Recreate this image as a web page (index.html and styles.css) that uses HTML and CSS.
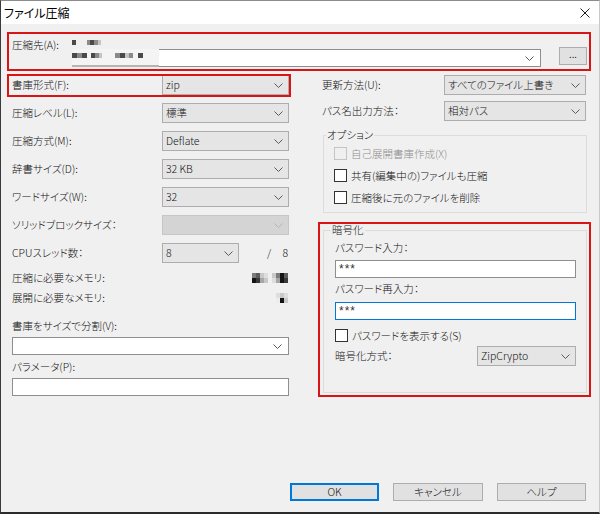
FILE: index.html
```html
<!DOCTYPE html>
<html lang="ja">
<head>
<meta charset="utf-8">
<title>ファイル圧縮</title>
<link rel="stylesheet" href="styles.css">
</head>
<body>
<div class="window">
  <div class="titlebar">
    <span class="title">ファイル圧縮</span>
    <svg class="close" width="10" height="10" viewBox="0 0 10 10"><path d="M0.5 0.5 L9.5 9.5 M9.5 0.5 L0.5 9.5" stroke="#1e1e1e" stroke-width="1" fill="none"/></svg>
  </div>
  <div class="content">
    <div class="dest">
      <span class="label dest-label">圧縮先(A):</span>
      <div class="dest-main">
        <div class="blur-line">
          <span class="px d w4"></span><span class="gap w11"></span><span class="px m w3"></span><span class="px d w4"></span><span class="px m w4"></span><span class="px l w3"></span>
        </div>
        <div class="dest-row">
          <div class="combo-edit dest-combo">
            <div class="mask">
              <span class="px d w5"></span><span class="px m w5"></span><span class="px d w5"></span><span class="gap w4"></span><span class="px d w4"></span><span class="px m w4"></span><span class="px l w3"></span><span class="gap w13"></span><span class="px m w5"></span><span class="px d w5"></span><span class="px l w4"></span><span class="px m w4"></span><span class="gap w5"></span><span class="px d w5"></span>
            </div>
            <div class="edit-field">
              <svg class="chev" width="9" height="5" viewBox="0 0 9 5"><path d="M0.5 0.5 L4.5 4.5 L8.5 0.5" stroke="#5a5a5a" fill="none"/></svg>
            </div>
          </div>
          <button class="btn browse">...</button>
        </div>
      </div>
    </div>

    <div class="columns">
      <div class="left">
        <div class="rows">
          <div class="row"><span class="label">書庫形式(F):</span><div class="combo wide"><span>zip</span><svg class="chev" width="9" height="5" viewBox="0 0 9 5"><path d="M0.5 0.5 L4.5 4.5 L8.5 0.5" stroke="#5a5a5a" fill="none"/></svg></div></div>
          <div class="row"><span class="label">圧縮レベル(L):</span><div class="combo wide"><span>標準</span><svg class="chev" width="9" height="5" viewBox="0 0 9 5"><path d="M0.5 0.5 L4.5 4.5 L8.5 0.5" stroke="#5a5a5a" fill="none"/></svg></div></div>
          <div class="row"><span class="label">圧縮方式(M):</span><div class="combo wide"><span>Deflate</span><svg class="chev" width="9" height="5" viewBox="0 0 9 5"><path d="M0.5 0.5 L4.5 4.5 L8.5 0.5" stroke="#5a5a5a" fill="none"/></svg></div></div>
          <div class="row"><span class="label">辞書サイズ(D):</span><div class="combo wide"><span>32 KB</span><svg class="chev" width="9" height="5" viewBox="0 0 9 5"><path d="M0.5 0.5 L4.5 4.5 L8.5 0.5" stroke="#5a5a5a" fill="none"/></svg></div></div>
          <div class="row"><span class="label">ワードサイズ(W):</span><div class="combo wide"><span>32</span><svg class="chev" width="9" height="5" viewBox="0 0 9 5"><path d="M0.5 0.5 L4.5 4.5 L8.5 0.5" stroke="#5a5a5a" fill="none"/></svg></div></div>
          <div class="row"><span class="label">ソリッドブロックサイズ：</span><div class="combo wide disabled"><span></span><svg class="chev" width="9" height="5" viewBox="0 0 9 5"><path d="M0.5 0.5 L4.5 4.5 L8.5 0.5" stroke="#b4b4b4" fill="none"/></svg></div></div>
          <div class="row"><span class="label">CPUスレッド数：</span>
            <div class="cpu">
              <div class="combo narrow"><span>8</span><svg class="chev" width="9" height="5" viewBox="0 0 9 5"><path d="M0.5 0.5 L4.5 4.5 L8.5 0.5" stroke="#5a5a5a" fill="none"/></svg></div>
              <span class="of"><span>/</span><span>8</span></span>
            </div>
          </div>
        </div>
        <div class="mem-row first"><span class="label">圧縮に必要なメモリ:</span>
          <span class="mem">
            <span class="pix"><i class="c4"></i><i class="c3"></i><i class="c6"></i><i class="c7"></i><i class="c1"></i><i class="c2"></i><i class="c5"></i><i class="c6"></i></span>
            <span class="pix"><i class="c6"></i><i class="c4"></i><i class="c1"></i><i class="c3"></i><i class="c7"></i><i class="c5"></i><i class="c1"></i><i class="c2"></i></span>
          </span>
        </div>
        <div class="mem-row"><span class="label">展開に必要なメモリ:</span>
          <span class="mem">
            <span class="pix three"><i class="c7"></i><i class="c6"></i><i class="c7"></i><i class="c8"></i><i class="c1"></i><i class="c6"></i></span>
          </span>
        </div>
        <div class="field-label">書庫をサイズで分割(V):</div>
        <div class="combo-edit split"><div class="edit-field"><svg class="chev" width="9" height="5" viewBox="0 0 9 5"><path d="M0.5 0.5 L4.5 4.5 L8.5 0.5" stroke="#5a5a5a" fill="none"/></svg></div></div>
        <div class="field-label param">パラメータ(P):</div>
        <div class="textbox"></div>
      </div>

      <div class="right">
        <div class="row"><span class="label">更新方法(U):</span><div class="combo rwide"><span>すべてのファイル上書き</span><svg class="chev" width="9" height="5" viewBox="0 0 9 5"><path d="M0.5 0.5 L4.5 4.5 L8.5 0.5" stroke="#5a5a5a" fill="none"/></svg></div></div>
        <div class="row second"><span class="label">パス名出力方法：</span><div class="combo rwide"><span>相対パス</span><svg class="chev" width="9" height="5" viewBox="0 0 9 5"><path d="M0.5 0.5 L4.5 4.5 L8.5 0.5" stroke="#5a5a5a" fill="none"/></svg></div></div>

        <fieldset class="group options">
          <legend>オプション</legend>
          <div class="check disabled"><span class="box"></span><span>自己展開書庫作成(X)</span></div>
          <div class="check"><span class="box"></span><span>共有(編集中の)ファイルも圧縮</span></div>
          <div class="check"><span class="box"></span><span>圧縮後に元のファイルを削除</span></div>
        </fieldset>

        <fieldset class="group crypt">
          <legend>暗号化</legend>
          <div class="field-label pw1">パスワード入力：</div>
          <div class="textbox pw"><span>***</span></div>
          <div class="field-label pw2">パスワード再入力：</div>
          <div class="textbox pw focus"><span>***</span></div>
          <div class="check show"><span class="box"></span><span>パスワードを表示する(S)</span></div>
          <div class="row method"><span class="label">暗号化方式：</span><div class="combo crypt-combo"><span>ZipCrypto</span><svg class="chev" width="9" height="5" viewBox="0 0 9 5"><path d="M0.5 0.5 L4.5 4.5 L8.5 0.5" stroke="#5a5a5a" fill="none"/></svg></div></div>
        </fieldset>
      </div>
    </div>

    <div class="buttons">
      <button class="btn dlg default">OK</button>
      <button class="btn dlg cancel">キャンセル</button>
      <button class="btn dlg">ヘルプ</button>
    </div>
  </div>

  <div class="mark mark-dest"></div>
  <div class="mark mark-format"></div>
  <div class="mark mark-crypt"></div>
</div>
</body>
</html>
```

FILE: styles.css
```css
* { box-sizing: border-box; }
html, body { margin: 0; padding: 0; }
body {
  width: 600px;
  height: 514px;
  overflow: hidden;
  font-family: "Noto Sans CJK JP", "Noto Sans", sans-serif;
  font-size: 10.5px;
  font-weight: 300;
  font-feature-settings: "palt";
  color: #111;
  background: #f0f0f0;
}
.window {
  position: relative;
  width: 600px;
  height: 514px;
  border-left: 1px solid #3a3a3a;
  border-top: 1px solid #8c8c8c;
  border-right: 1px solid #c8c8c8;
  border-bottom: 2px solid #2b2b2b;
  background: #f0f0f0;
  display: flex;
  flex-direction: column;
}
.titlebar {
  height: 23px;
  flex: none;
  background: #fff;
  display: flex;
  align-items: center;
  justify-content: space-between;
  padding: 0 9px 0 3px;
}
.title { font-size: 12px; font-weight: 400; line-height: 16px; color: #000; }
.close { display: block; }

.content {
  flex: 1;
  display: flex;
  flex-direction: column;
  padding: 0 12px 11px 11px;
}
.label { line-height: 14px; white-space: nowrap; }

/* destination */
.dest { display: flex; align-items: flex-start; padding-top: 14px; }
.dest-label { width: 60px; flex: none; }
.dest-main { flex: 1; display: flex; flex-direction: column; }
.blur-line { height: 9px; display: flex; align-items: flex-start; padding-top: 2px; }
.dest-row { display: flex; align-items: flex-start; gap: 18px; }
.dest-combo { flex: 1; margin-top: 2px; }
.browse { width: 28px; height: 18px; flex: none; font-size: 8px; line-height: 10px; padding: 0 0 4px; }

.px { display: inline-block; height: 5px; flex: none; }
.px.d { background: #4a4a4a; }
.px.m { background: #8a8a8a; }
.px.l { background: #c4c4c4; }
.gap { display: inline-block; height: 5px; flex: none; }
.w3 { width: 3px; } .w4 { width: 4px; } .w5 { width: 5px; } .w11 { width: 11px; } .w13 { width: 13px; }

/* pixelated (blurred) values */
.pix { display: grid; grid-template-columns: repeat(4, 4px); grid-auto-rows: 5px; }
.pix.three { grid-template-columns: repeat(3, 4px); }
.pix i { display: block; }
.c1 { background: #141414; }
.c2 { background: #3a3a3a; }
.c3 { background: #5c5c5c; }
.c4 { background: #7c7c7c; }
.c5 { background: #a6a6a6; }
.c6 { background: #c8c8c8; }
.c7 { background: #dedede; }
.c8 { background: #ececec; }

/* combos */
.combo {
  height: 20px;
  display: flex;
  align-items: center;
  justify-content: space-between;
  padding: 0 5px 0 3px;
  background: #e5e5e5;
  border: 1px solid #adadad;
  white-space: nowrap;
  flex: none;
}
.combo span { line-height: 14px; }
.chev { display: block; flex: none; }
.combo.wide { width: 127px; }
.combo.narrow { width: 77px; }
.combo.disabled { background: #d4d4d4; border-color: #c6c6c6; }
.combo.rwide { width: 142px; margin-right: 1px; }
.combo-edit { display: flex; height: 18px; }
.mask {
  width: 87px;
  flex: none;
  display: flex;
  align-items: flex-start;
  padding-top: 4px;
  border-bottom: 2px solid #b4b4b4;
  background: #f4f4f4;
}
.edit-field {
  flex: 1;
  background: #fff;
  border: 1px solid #8e8e8e;
  display: flex;
  align-items: center;
  justify-content: flex-end;
  padding-right: 6px;
}
.dest-combo .edit-field { border-left: none; }

.columns { display: flex; margin-top: 8px; }
.left { width: 277px; flex: none; display: flex; flex-direction: column; }
.right { width: 265px; margin-left: 33px; flex: none; display: flex; flex-direction: column; }
.rows { display: flex; flex-direction: column; gap: 8px; }
.row { height: 20px; display: flex; align-items: center; justify-content: space-between; }
.cpu { width: 127px; display: flex; align-items: center; justify-content: space-between; }
.of { width: 22px; display: flex; justify-content: space-between; line-height: 14px; padding-right: 1px; }

.mem-row { height: 20px; display: flex; align-items: center; justify-content: space-between; }
.mem-row.first { margin-top: 5px; }
.mem { display: flex; gap: 4px; padding-right: 1px; }

.field-label { line-height: 16px; margin-top: 10px; white-space: nowrap; }
.field-label.param { margin-top: 4px; }
.split { margin-top: 3px; width: 277px; }
.textbox {
  height: 18px;
  margin-top: 3px;
  background: #fff;
  border: 1px solid #8e8e8e;
  display: flex;
  align-items: flex-start;
  padding-left: 3px;
}
.textbox span {
  font-family: "Liberation Sans", sans-serif;
  font-size: 12px;
  font-weight: 400;
  line-height: 12px;
  letter-spacing: 1px;
  padding-top: 2px;
  color: #333;
}
.textbox.focus { border-color: #0078d7; }

.row.second { margin-top: 6px; }

/* group boxes */
.group {
  margin: 0;
  border: 1px solid #dcdcdc;
  min-width: 0;
}
.group legend { line-height: 14px; padding: 0 1px; }
.options { margin: 7px 0 0 1px; width: 264px; padding: 0 0 4px 10px; }
.options legend { margin-left: -8px; }
.check { height: 22px; display: flex; align-items: center; gap: 4px; white-space: nowrap; }
.box { width: 13px; height: 13px; border: 1px solid #333; background: #fff; flex: none; }
.check.disabled { color: #8d8d8d; }
.check.disabled .box { border-color: #c4c4c4; background: #f0f0f0; }

.crypt { margin: 10px 0 0 1px; width: 264px; padding: 0 10px 26px 11px; }
.crypt legend { margin-left: -4px; }
.crypt .field-label { margin-top: 3px; }
.textbox.pw { margin-top: 4px; }
.textbox.pw.focus { margin-top: 5px; }
.check.show { height: 20px; margin-top: 5px; }
.row.method { margin-top: 1px; }
.crypt-combo { width: 99px; }

/* buttons */
.btn {
  font-family: inherit;
  font-size: 10.5px;
  font-weight: 300;
  font-feature-settings: "palt";
  color: #111;
  background: #e1e1e1;
  border: 1px solid #adadad;
  border-radius: 0;
  margin: 0;
}
.buttons { margin-top: auto; display: flex; justify-content: flex-end; gap: 14px; padding-right: 1px; }
.dlg { width: 89px; height: 18px; padding: 0; line-height: 14px; }
.dlg.cancel { width: 90px; }
.dlg.default { border: 2px solid #0078d7; }

/* red annotation frames */
.mark { position: absolute; border: 2px solid #d81414; pointer-events: none; }
.mark-dest { left: 6px; top: 31px; width: 584px; height: 39px; }
.mark-format { left: 6px; top: 73px; width: 284px; height: 23px; }
.mark-crypt { left: 317px; top: 221px; width: 273px; height: 175px; }
```
